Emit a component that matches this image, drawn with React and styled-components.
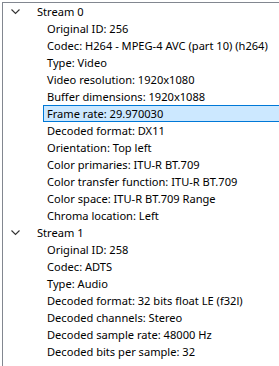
import React from 'react'
import styled, { createGlobalStyle } from 'styled-components'

const Global = createGlobalStyle`
  html, body {
    margin: 0;
    padding: 0;
    background: #fff;
  }
  body {
    font-family: 'Noto Sans', 'Open Sans', sans-serif;
    font-size: 11.1px;
    color: #000;
  }
`

const Tree = styled.div`
  margin: 2px 0 0 2px;
  height: 364px;
  border-left: 1px solid #828790;
  border-top: 1px solid #828790;
  overflow: hidden;
`

const Row = styled.div`
  display: flex;
  align-items: center;
  height: 17px;
  white-space: nowrap;
  padding-left: ${(p) => p.indent}px;
`

const Chevron = styled.svg`
  width: 9px;
  height: 6px;
  margin: 0 13px 0 0;
`

const Label = styled.span`
  display: flex;
  align-items: center;
  height: 100%;
  box-sizing: border-box;
  padding: 0 3px;
  flex: ${(p) => (p.selected ? 1 : 'none')};
  background: ${(p) => (p.selected ? '#cce8ff' : 'transparent')};
  border: 1px solid ${(p) => (p.selected ? '#0078d7' : 'transparent')};
  border-right: none;
`

const streams = [
  {
    name: 'Stream 0',
    items: [
      'Original ID: 256',
      'Codec: H264 - MPEG-4 AVC (part 10) (h264)',
      'Type: Video',
      'Video resolution: 1920x1080',
      'Buffer dimensions: 1920x1088',
      'Frame rate: 29.970030',
      'Decoded format: DX11',
      'Orientation: Top left',
      'Color primaries: ITU-R BT.709',
      'Color transfer function: ITU-R BT.709',
      'Color space: ITU-R BT.709 Range',
      'Chroma location: Left',
    ],
  },
  {
    name: 'Stream 1',
    items: [
      'Original ID: 258',
      'Codec: ADTS',
      'Type: Audio',
      'Decoded format: 32 bits float LE (f32l)',
      'Decoded channels: Stereo',
      'Decoded sample rate: 48000 Hz',
      'Decoded bits per sample: 32',
    ],
  },
]

export default function App() {
  return (
    <>
      <Global />
      <Tree>
        {streams.map((s) => (
          <React.Fragment key={s.name}>
            <Row indent={8}>
              <Chevron viewBox="0 0 9 6">
                <path d="M0.5 0.5 L4.5 4.5 L8.5 0.5" fill="none" stroke="#333" strokeWidth="1.1" />
              </Chevron>
              <Label>{s.name}</Label>
            </Row>
            {s.items.map((t) => (
              <Row key={t} indent={40}>
                <Label selected={t.startsWith('Frame rate')}>{t}</Label>
              </Row>
            ))}
          </React.Fragment>
        ))}
      </Tree>
    </>
  )
}
